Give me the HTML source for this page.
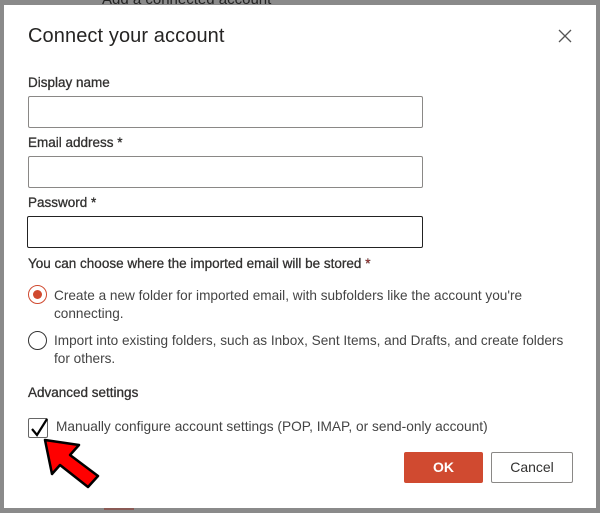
<!DOCTYPE html>
<html style="overflow:hidden;width:600px;height:513px"><head><meta charset="utf-8"><style>
*{margin:0;padding:0;box-sizing:border-box}
body{width:600px;height:513px;background:#8a8a8a;position:relative;overflow:hidden;font-family:"Liberation Sans",sans-serif;color:#323130}
.bgt{position:absolute;left:102px;top:-9px;font-size:15px;color:#222}
.dlg{position:absolute;left:4px;top:5px;width:592px;height:503px;background:#fff}
.a{position:absolute;white-space:nowrap}
h1{position:absolute;left:24px;top:20px;font-size:20px;font-weight:normal;color:#252423;letter-spacing:.1px}
.lbl{font-size:13.5px;color:#323130;-webkit-text-stroke:.3px #323130}
.in{position:absolute;left:24px;width:395px;height:32px;border:1px solid #8a8886;border-radius:2px}
.t{font-size:13.6px;color:#444}
.rad{position:absolute;width:19px;height:19px;border-radius:50%;border:1px solid #333}
.btn{position:absolute;height:31px;font-size:14px;text-align:center;line-height:31px;border-radius:2px}
</style></head><body>
<div class="bgt">Add a connected account</div>
<div class="a" style="left:104px;top:508px;width:30px;height:5px;border-top:2px solid #8a2a20;opacity:.5"></div>
<div class="dlg">
<h1>Connect your account</h1>
<svg class="a" style="left:554px;top:24px" width="14" height="14"><path d="M1 1L13 13M13 1L1 13" stroke="#555" stroke-width="1.3"/></svg>
<div class="a lbl" style="left:24px;top:70px">Display name</div>
<div class="in" style="top:91px"></div>
<div class="a lbl" style="left:24px;top:130px">Email address *</div>
<div class="in" style="top:151px"></div>
<div class="a lbl" style="left:24px;top:190px">Password *</div>
<div class="in" style="top:211px;left:23px;width:396px;border-color:#222"></div>
<div class="a lbl" style="left:24px;top:251px">You can choose where the imported email will be stored <span style="color:#c33">*</span></div>
<div class="rad" style="left:24px;top:280px;border-color:#d04a30"><div style="position:absolute;left:4px;top:4px;width:9px;height:9px;border-radius:50%;background:#d04a30"></div></div>
<div class="a t" style="left:50px;top:282px;line-height:18px">Create a new folder for imported email, with subfolders like the account you're<br>connecting.</div>
<div class="rad" style="left:24px;top:326px"></div>
<div class="a t" style="left:50px;top:327px;line-height:18px">Import into existing folders, such as Inbox, Sent Items, and Drafts, and create folders<br>for others.</div>
<div class="a lbl" style="left:24px;top:380px">Advanced settings</div>
<div class="a" style="left:24px;top:413px;width:20px;height:20px;border:1px solid #666;border-radius:2px"></div>
<svg class="a" style="left:24px;top:411px" width="22" height="22"><path d="M4 13L9 19L19 3" stroke="#000" stroke-width="2.2" fill="none"/></svg>
<div class="a t" style="left:52px;top:414px;font-size:13.7px">Manually configure account settings (POP, IMAP, or send-only account)</div>
<div class="btn" style="left:400px;top:447px;width:79px;background:#d04a30;color:#fff;font-weight:bold">OK</div>
<div class="btn" style="left:487px;top:447px;width:82px;border:1px solid #8a8886;color:#323130;line-height:29px">Cancel</div>
</div>
<svg class="a" style="left:0;top:0" width="600" height="513"><polygon points="45,440 79,445 70,455 98,476 88,487 60,465 52,474" fill="#f00" stroke="#000" stroke-width="2.5" stroke-linejoin="round"/></svg>
</body></html>
